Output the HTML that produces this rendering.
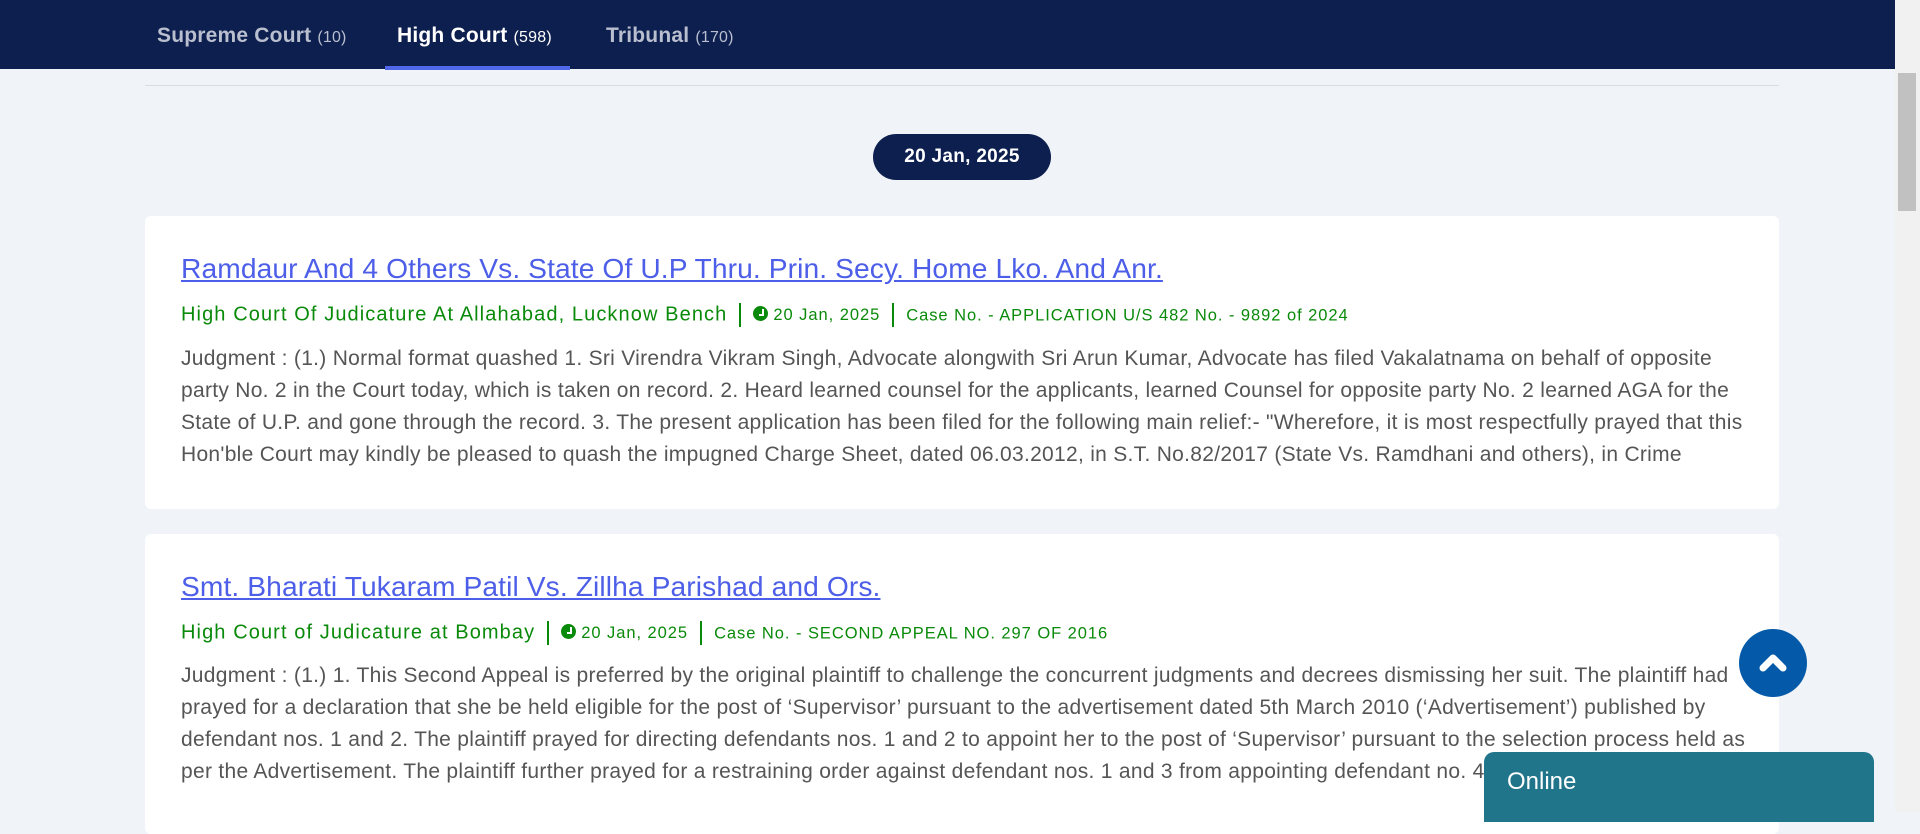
<!DOCTYPE html>
<html><head><meta charset="utf-8"><style>
*{margin:0;padding:0;box-sizing:border-box}
body{width:1920px;height:812px;overflow:hidden;background:#f0f3f8;font-family:"Liberation Sans",Arial,sans-serif;position:relative}
.nav{position:absolute;left:0;top:0;width:1895px;height:69px;background:#0d1f4f}
.tab{position:absolute;top:24px;font-size:21px;font-weight:bold;color:#b9bfcf;letter-spacing:0.2px}
.tab small{font-size:16px;font-weight:normal}
.tab.act{color:#fff}
.ul{position:absolute;left:385px;top:66px;width:185px;height:4px;background:#4f67e8}
.hr{position:absolute;left:145px;top:85px;width:1634px;height:1px;background:#d8dce3}
.pill{position:absolute;left:873px;top:134px;width:178px;height:46px;border-radius:23px;background:#0d1f4f;color:#fff;font-size:19px;font-weight:bold;text-align:center;line-height:46px;letter-spacing:0.3px}
.card{position:absolute;left:145px;width:1634px;background:#fff;border-radius:6px;padding:0 36px}
.t{position:absolute;left:36px;font-size:28.2px;color:#4d5ee8;text-decoration:underline;white-space:nowrap;letter-spacing:0.1px}
.m{position:absolute;left:36px;font-size:20px;color:#0a8a0a;white-space:nowrap;letter-spacing:1.1px}
.m .s{font-size:16.5px;letter-spacing:0.95px}
.m .bar{display:inline-block;width:2px;height:24px;background:#0a8a0a;vertical-align:middle;margin:0 12px}
.clk{display:inline-block;width:15px;height:15px;border-radius:50%;background:#0a8a0a;vertical-align:-1px;position:relative;margin-right:5px}
.clk:after{content:"";position:absolute;left:6px;top:3px;width:3px;height:5px;border-right:2px solid #fff;border-bottom:2px solid #fff}
.b{position:absolute;left:36px;width:1565px;font-size:21px;line-height:32px;color:#555;letter-spacing:0.29px}
.sb{position:absolute;left:1895px;top:0;width:25px;height:812px;background:#f1f1f1}
.thumb{position:absolute;left:1898px;top:73px;width:18px;height:138px;background:#c1c1c1}
.up{position:absolute;left:1739px;top:629px;width:68px;height:68px;border-radius:50%;background:#045aa8}
.online{position:absolute;left:1484px;top:752px;width:390px;height:70px;background:#21758b;border-radius:10px 10px 0 0;color:#fff;font-size:24px;padding:16px 23px}
</style></head><body>
<div class="nav">
<div class="tab" style="left:157px">Supreme Court <small>(10)</small></div>
<div class="tab act" style="left:397px">High Court <small>(598)</small></div>
<div class="tab" style="left:606px">Tribunal <small>(170)</small></div>
<div class="ul"></div>
</div>
<div class="hr"></div>
<div class="pill">20 Jan, 2025</div>
<div class="card" style="top:216px;height:293px">
<div class="t" style="top:36px">Ramdaur And 4 Others Vs. State Of U.P Thru. Prin. Secy. Home Lko. And Anr.</div>
<div class="m" style="top:87px">High Court Of Judicature At Allahabad, Lucknow Bench<span class="bar"></span><span class="s"><span class="clk"></span>20 Jan, 2025</span><span class="bar"></span><span class="s">Case No. - APPLICATION U/S 482 No. - 9892 of 2024</span></div>
<div class="b" style="top:127px">Judgment : (1.) Normal format quashed 1. Sri Virendra Vikram Singh, Advocate alongwith Sri Arun Kumar, Advocate has filed Vakalatnama on behalf of opposite party No. 2 in the Court today, which is taken on record. 2. Heard learned counsel for the applicants, learned Counsel for opposite party No. 2 learned AGA for the State of U.P. and gone through the record. 3. The present application has been filed for the following main relief:- "Wherefore, it is most respectfully prayed that this Hon'ble Court may kindly be pleased to quash the impugned Charge Sheet, dated 06.03.2012, in S.T. No.82/2017 (State Vs. Ramdhani and others), in Crime</div>
</div>
<div class="card" style="top:534px;height:300px">
<div class="t" style="top:36px">Smt. Bharati Tukaram Patil Vs. Zillha Parishad and Ors.</div>
<div class="m" style="top:87px">High Court of Judicature at Bombay<span class="bar"></span><span class="s"><span class="clk"></span>20 Jan, 2025</span><span class="bar"></span><span class="s">Case No. - SECOND APPEAL NO. 297 OF 2016</span></div>
<div class="b" style="top:126px">Judgment : (1.) 1. This Second Appeal is preferred by the original plaintiff to challenge the concurrent judgments and decrees dismissing her suit. The plaintiff had prayed for a declaration that she be held eligible for the post of ‘Supervisor’ pursuant to the advertisement dated 5th March 2010 (‘Advertisement’) published by defendant nos. 1 and 2. The plaintiff prayed for directing defendants nos. 1 and 2 to appoint her to the post of ‘Supervisor’ pursuant to the selection process held as per the Advertisement. The plaintiff further prayed for a restraining order against defendant nos. 1 and 3 from appointing defendant no. 4</div>
</div>
<div class="sb"></div><div class="thumb"></div>
<div class="up"><svg width="68" height="68"><path d="M24 39 L34 29 L44 39" stroke="#fff" stroke-width="7" fill="none" stroke-linecap="round" stroke-linejoin="round"/></svg></div>
<div class="online">Online</div>
</body></html>
